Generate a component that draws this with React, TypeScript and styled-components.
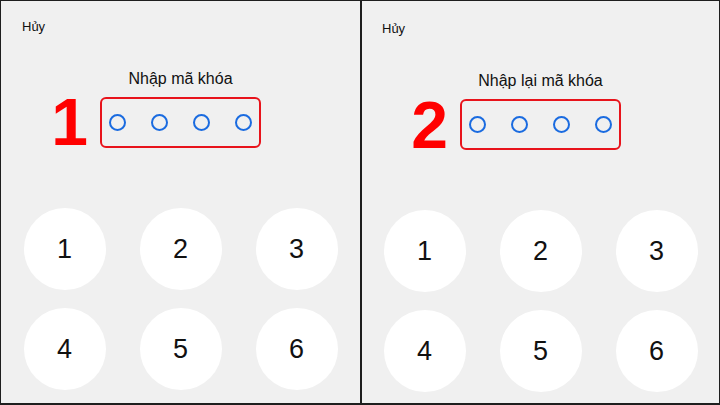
import React from "react";
import styled, { createGlobalStyle } from "styled-components";

const Global = createGlobalStyle`
  html, body { margin: 0; padding: 0; background: #f0f0f0; }
  * { box-sizing: border-box; }
`;

const Frame = styled.div`
  width: 720px;
  height: 405px;
  display: flex;
  border: 1px solid #1e1e1e;
  border-bottom-width: 2px;
  background: #f0f0f0;
  font-family: "Liberation Sans", Arial, sans-serif;
  color: #111;
  overflow: hidden;
`;

const Panel = styled.section<{ $width?: number; $shift: number }>`
  ${(p) => (p.$width ? `width: ${p.$width}px; flex: none;` : "flex: 1;")}
  display: flex;
  flex-direction: column;
  padding-top: ${(p) => p.$shift}px;
`;

const Divider = styled.div`
  width: 2px;
  flex: none;
  background: #1e1e1e;
`;

const Cancel = styled.div<{ $left: number }>`
  margin-top: 18px;
  padding-left: ${(p) => p.$left}px;
  font-size: 13px;
  line-height: 16px;
`;

const Title = styled.div`
  margin-top: 34px;
  text-align: center;
  font-size: 16px;
  line-height: 20px;
`;

const CodeRow = styled.div`
  margin-top: 8px;
  display: flex;
  justify-content: center;
`;

const CodeBox = styled.div`
  position: relative;
  width: 161px;
  height: 51px;
  border: 2px solid #e8131b;
  border-radius: 6px;
  display: flex;
  align-items: center;
  justify-content: center;
  gap: 25px;
`;

const Dot = styled.span`
  width: 17px;
  height: 17px;
  border: 2px solid #1a6be0;
  border-radius: 50%;
`;

const StepLabel = styled.span<{ $top: number }>`
  position: absolute;
  right: calc(100% + 14px);
  top: ${(p) => p.$top}px;
  font-size: 66px;
  line-height: 66px;
  font-weight: 700;
  color: #ff0000;
`;

const Keypad = styled.div`
  margin-top: 60px;
  display: grid;
  grid-template-columns: repeat(3, 82px);
  column-gap: 34px;
  row-gap: 18px;
  justify-content: center;
`;

const Key = styled.div`
  width: 82px;
  height: 82px;
  border-radius: 50%;
  background: #ffffff;
  display: flex;
  align-items: center;
  justify-content: center;
  font-size: 27px;
  color: #111;
`;

type ScreenProps = {
  title: string;
  step: string;
  width?: number;
  shift: number;
  cancelLeft: number;
  labelTop: number;
};

const Screen = ({ title, step, width, shift, cancelLeft, labelTop }: ScreenProps) => (
  <Panel $width={width} $shift={shift}>
    <Cancel $left={cancelLeft}>Hủy</Cancel>
    <Title>{title}</Title>
    <CodeRow>
      <CodeBox>
        <StepLabel $top={labelTop}>{step}</StepLabel>
        {[0, 1, 2, 3].map((i) => (
          <Dot key={i} />
        ))}
      </CodeBox>
    </CodeRow>
    <Keypad>
      {["1", "2", "3", "4", "5", "6"].map((d) => (
        <Key key={d}>{d}</Key>
      ))}
    </Keypad>
  </Panel>
);

export default function App() {
  return (
    <>
      <Global />
      <Frame>
        <Screen title="Nhập mã khóa" step="1" width={359} shift={0} cancelLeft={21} labelTop={-10} />
        <Divider />
        <Screen title="Nhập lại mã khóa" step="2" shift={2} cancelLeft={20} labelTop={-9} />
      </Frame>
    </>
  );
}
